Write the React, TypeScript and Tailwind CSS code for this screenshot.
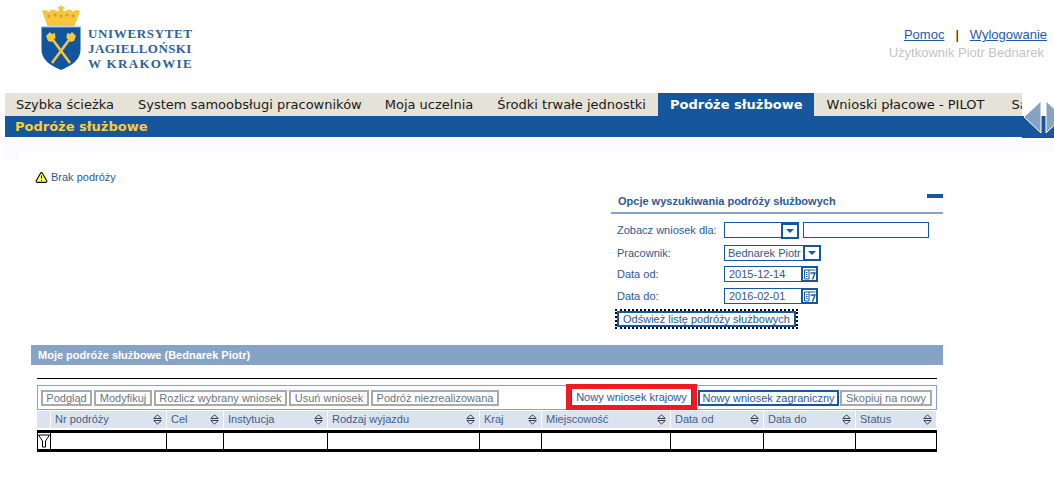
import React from 'react';
import { AlertTriangle } from 'lucide-react';

const tabs = [
  { name: 'Szybka ścieżka', cls: 'pl-[11px] pr-[12px]' },
  { name: 'System samoobsługi pracowników', cls: 'pl-[12px] pr-[11px]' },
  { name: 'Moja uczelnia', cls: 'px-[12px]' },
  { name: 'Środki trwałe jednostki', cls: 'px-[12px]' },
  { name: 'Podróże służbowe', cls: 'px-[12px]' },
  { name: 'Wnioski płacowe - PILOT', cls: 'pl-[12px] pr-[15px]' },
  { name: 'Samoobsługa', cls: 'px-[12px]' },
];
const leftButtons = [
  { name: 'Podgląd', w: 'w-[51px]' },
  { name: 'Modyfikuj', w: 'w-[58px]' },
  { name: 'Rozlicz wybrany wniosek', w: 'w-[133px]' },
  { name: 'Usuń wniosek', w: 'w-[80px]' },
  { name: 'Podróż niezrealizowana', w: 'w-[128px]' },
];
const columns = [
  { name: 'Nr podróży', w: 'w-[116px]' },
  { name: 'Cel', w: 'w-[57px]' },
  { name: 'Instytucja', w: 'w-[104px]' },
  { name: 'Rodzaj wyjazdu', w: 'w-[152px]' },
  { name: 'Kraj', w: 'w-[62px]' },
  { name: 'Miejscowość', w: 'w-[129px]' },
  { name: 'Data od', w: 'w-[93px]' },
  { name: 'Data do', w: 'w-[92px]' },
  { name: 'Status', w: 'w-[81px]' },
];

const Logo = () => (
  <div className="flex items-start">
    <svg width="40" height="66" viewBox="0 0 40 66" className="shrink-0">
      <path d="M1 6 C4 4 6 5 8 7 C10 4 13 4 15 6 L18 6 V3.5 H16.5 V2 H18.6 V0.8 H21.4 V2 H23.5 V3.5 H22 V6 L25 6 C27 4 30 4 32 7 C34 5 36 4 39 6 L33.5 21 H6.5 Z" fill="#f4c73f" />
      <circle cx="8" cy="11" r="1.5" fill="#d99e22" />
      <circle cx="14" cy="10" r="1.5" fill="#d99e22" />
      <circle cx="20" cy="11" r="1.5" fill="#d99e22" />
      <circle cx="26" cy="10" r="1.5" fill="#d99e22" />
      <circle cx="32" cy="11" r="1.5" fill="#d99e22" />
      <path d="M0.5 22 H39.5 V44 C39.5 56 29 61 20 65 C11 61 0.5 56 0.5 44 Z" fill="#10559e" />
      <path d="M0.5 22 H39.5" stroke="#8fb0d4" strokeWidth="1" />
      <path d="M12 35 L29 58 M28 35 L11 58" stroke="#f4c73f" strokeWidth="2.6" />
      <path d="M5 31 L9 27 L11 29 L14 28 L14.5 33 L10.5 37 L7 36 Z M35 31 L31 27 L29 29 L26 28 L25.5 33 L29.5 37 L33 36 Z" fill="#f4c73f" />
    </svg>
    <div className="ml-[7px] mt-[21px] font-['Liberation_Serif',serif] text-[13px] font-bold leading-[15px] tracking-[0.65px] text-[#2f6199]">
      <div>UNIWERSYTET</div>
      <div className="tracking-[0.4px]">JAGIELLOŃSKI</div>
      <div className="tracking-[1.3px]">W KRAKOWIE</div>
    </div>
  </div>
);

const Arrow = ({ dir }: { dir: 'left' | 'right' }) => (
  <svg width="19" height="34" viewBox="0 0 19 34" className="shrink-0">
    <path d={dir === 'left' ? 'M18 1 V33 L1 17 Z' : 'M1 1 V33 L18 17 Z'} fill="#87a3c3" stroke="#fff" strokeWidth="1" />
  </svg>
);

const Caret = () => (
  <span className="flex h-[16px] w-[18px] shrink-0 items-center justify-center border-2 border-[#15569c] bg-white">
    <span className="h-0 w-0 border-x-[4px] border-t-[4px] border-x-transparent border-t-[#15569c]" />
  </span>
);

const Calendar = () => (
  <span className="flex h-[16px] w-[17px] shrink-0 items-center justify-center border-2 border-[#15569c] bg-white">
    <svg width="12" height="11" viewBox="0 0 12 11" fill="none" stroke="#15569c">
      <path d="M.5 1h11M.5 1v9h4.5V1M2 3.5h1.5M2 5.5h1.5M2 7.5h1.5" />
      <path d="M6.5 4h4.5L8.5 10.5" strokeWidth="1.4" />
    </svg>
  </span>
);

const Field = ({ label, cls, children }: { label: string; cls: string; children: React.ReactNode }) => (
  <div className={`flex h-[16px] items-center ${cls}`}>
    <span className="w-[113px] shrink-0 pl-[6px] whitespace-nowrap text-[#2d5a91]">{label}</span>
    {children}
  </div>
);

const DateInput = ({ value }: { value: string }) => (
  <span className="flex h-[16px] w-[94px] items-center justify-between border-y border-l border-[#15569c] pl-[4px] text-[#2d5a91]">
    {value}
    <Calendar />
  </span>
);

const SortIcon = () => (
  <svg width="9" height="11" viewBox="0 0 9 11" fill="none" stroke="#333d4a" className="shrink-0">
    <path d="M.8 4.5 4.5.8l3.7 3.7zM.8 6.5h7.4L4.5 10.2z" />
  </svg>
);

export default function App() {
  return (
    <div className="relative h-[483px] w-[1054px] overflow-hidden bg-white font-['Liberation_Sans',Arial,sans-serif] text-[11px]">
      <header className="flex h-[93px] justify-between pl-[41px] pt-[5px]">
        <Logo />
        <div className="pr-[7px] pt-[21px] text-right text-[13px] leading-[18px]">
          <div className="text-[#1f5aa8]">
            <a className="underline">Pomoc</a>
            <span className="mx-[11px] text-black">|</span>
            <a className="underline">Wylogowanie</a>
          </div>
          <div className="pr-[3px] text-[#c4c4c4]">Użytkownik Piotr Bednarek</div>
        </div>
      </header>

      <nav className="ml-[5px] flex h-[23px] w-[1017px] overflow-hidden bg-[#e5e3d8] font-['DejaVu_Sans',sans-serif] text-[13px] leading-[23px]">
        {tabs.map((t) => (
          <div key={t.name} className={`shrink-0 whitespace-nowrap ${t.cls} ${t.name === 'Podróże służbowe' ? 'bg-[#15569c] font-bold text-white' : 'text-[#1a1a1a]'}`}>
            {t.name}
          </div>
        ))}
      </nav>
      <div className="ml-[5px] h-[21px] bg-[#15569c] pl-[10px] font-['DejaVu_Sans',sans-serif] text-[13px] font-bold leading-[21px] text-[#ffcc33]">
        Podróże służbowe
      </div>
      <div className="absolute left-[1022px] top-[116px] h-[22px] w-[32px] bg-[#15569c]" />
      <div className="absolute left-[1023px] top-[100px] flex gap-[3px]">
        <Arrow dir="left" />
        <Arrow dir="right" />
      </div>

      <main className="ml-[5px] mt-[4px]">
        <div className="h-[11px] bg-[#fbfbff]" />
        <div className="h-[8px] w-[13px] bg-[#fbfbff]" />
        <div className="mt-[11px] flex h-[12px] items-center pl-[30px] text-[#2d5a91]">
          <AlertTriangle className="mr-[3px] h-[13px] w-[13px] fill-[#ffff66] text-black" strokeWidth={2} />
          Brak podróży
        </div>

        <section className="ml-[606px] mt-[11px] w-[332px]">
          <div className="relative h-[20px] border-b-2 border-[#87a3c3] pl-[7px] font-bold leading-[14px] text-[#2d5a91]">
            Opcje wyszukiwania podróży służbowych
            <span className="absolute right-0 top-0 h-full w-[16px] border-t-4 border-[#15569c] bg-[#fbfbff]" />
          </div>
          <Field label="Zobacz wniosek dla:" cls="mt-[8px]">
            <span className="flex h-[16px] w-[75px] justify-end border-y border-l border-[#15569c]"><Caret /></span>
            <span className="ml-[4px] h-[16px] w-[126px] border border-[#15569c]" />
          </Field>
          <Field label="Pracownik:" cls="mt-[7px]">
            <span className="flex h-[16px] w-[97px] items-center justify-between overflow-hidden border-y border-l border-[#15569c] pl-[3px] whitespace-nowrap text-[#2d5a91]">
              Bednarek Piotr
              <Caret />
            </span>
          </Field>
          <Field label="Data od:" cls="mt-[5px]"><DateInput value="2015-12-14" /></Field>
          <Field label="Data do:" cls="mt-[6px]"><DateInput value="2016-02-01" /></Field>
          <button className="ml-[4px] mt-[5px] block h-[20px] w-[183px] border-2 border-dotted border-black bg-white text-[#2d5a91]">
            <span className="flex h-full items-center justify-center border-2 border-[#15569c]">Odśwież listę podróży służbowych</span>
          </button>
        </section>
      </main>

      <section className="ml-[31px] mt-[16px] w-[912px]">
        <div className="h-[20px] bg-[#87a3c3] pl-[7px] font-bold leading-[20px] text-white">
          Moje podróże służbowe (Bednarek Piotr)
        </div>
        <div className="ml-[6px] mt-[13px] w-[900px]">
          <div className="h-[1px] bg-black" />
          <div className="mt-[6px] flex h-[25px] items-center justify-between border border-[#87a3c3] pl-[3px] pr-[4px]">
            <div className="flex gap-[2px]">
              {leftButtons.map((b) => (
                <button key={b.name} className={`h-[16px] border-2 border-[#a9a9a9] bg-white leading-[12px] whitespace-nowrap text-[#68747f] ${b.w}`}>
                  {b.name}
                </button>
              ))}
            </div>
            <div className="flex items-center gap-[1px]">
              <div className="-mt-[2px] h-[26px] w-[131px] border-[5px] border-[#ed1c24]">
                <button className="h-full w-full border-x border-[#15569c] bg-white whitespace-nowrap text-[#2d5a91]">Nowy wniosek krajowy</button>
              </div>
              <button className="h-[16px] w-[141px] border-2 border-[#15569c] bg-white leading-[12px] whitespace-nowrap text-[#2d5a91]">Nowy wniosek zagraniczny</button>
              <button className="h-[16px] w-[92px] border-2 border-[#a9a9a9] bg-white leading-[12px] whitespace-nowrap text-[#68747f]">Skopiuj na nowy</button>
            </div>
          </div>
          <div className="flex h-[18px] border-t border-white">
            <div className="w-[14px] shrink-0 border-r border-white bg-[#dce3ee]" />
            {columns.map((c) => (
              <div key={c.name} className={`flex shrink-0 items-center justify-between border-r border-white bg-[#dce3ee] px-[4px] text-[#3f5f8a] ${c.w}`}>
                {c.name}
                <SortIcon />
              </div>
            ))}
          </div>
          <div className="mt-[2px] flex h-[22px] border-y-[3px] border-black">
            <div className="flex w-[14px] shrink-0 items-center justify-center border-x border-black">
              <svg width="12" height="14" viewBox="0 0 12 14" fill="none" stroke="#000">
                <path d="M.5 1h11L7.5 7v6h-3V7z" />
              </svg>
            </div>
            {columns.map((c) => (
              <div key={c.name} className={`shrink-0 border-r border-black ${c.w}`} />
            ))}
          </div>
        </div>
      </section>
    </div>
  );
}
